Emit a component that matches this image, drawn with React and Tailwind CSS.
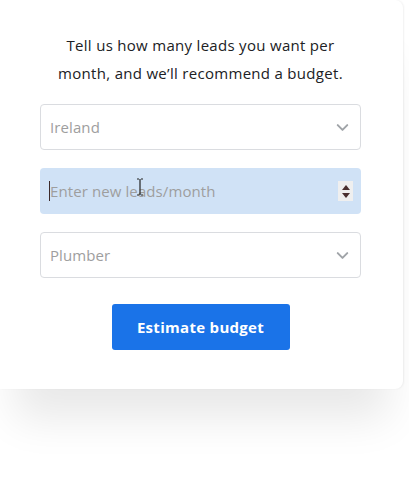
import React from 'react';
import { ChevronDown } from 'lucide-react';

const font = { fontFamily: '"Open Sans", "Liberation Sans", sans-serif' };

function SelectField({ value }) {
  return (
    <div className="flex items-center justify-between h-[46px] w-full rounded-[4px] border border-[#dadce0] bg-white pl-[9px] pr-[8px]">
      <span className="text-[15px] text-[#9e9e9e] tracking-[0.1px]">{value}</span>
      <ChevronDown size={19} strokeWidth={2.5} className="text-[#a0a4a8]" />
    </div>
  );
}

function LeadsField() {
  return (
    <div className="relative flex items-center justify-between h-[46px] w-full rounded-[4px] bg-[#d0e2f6] pl-[9px] pr-[8px]">
      <div className="flex items-center">
        <span className="block w-[1px] h-[20px] bg-[#3c2a2a]" />
        <span className="text-[15px] text-[#9e9e9e] tracking-[0.1px]">Enter new leads/month</span>
      </div>
      <div className="flex flex-col items-center justify-center gap-[3px] w-[15px] h-[20px] bg-[#efefef]">
        <span className="block w-0 h-0 border-l-[4px] border-r-[4px] border-b-[5px] border-l-transparent border-r-transparent border-b-[#4a2f2f]" />
        <span className="block w-0 h-0 border-l-[4px] border-r-[4px] border-t-[5px] border-l-transparent border-r-transparent border-t-[#4a2f2f]" />
      </div>
      {/* mouse text cursor */}
      <svg className="absolute left-[96px] top-[10px]" width="8" height="18" viewBox="0 0 8 18">
        <path d="M1 1h2M5 1h2M4 1v16M1 17h2M5 17h2" stroke="#222" strokeWidth="1.2" fill="none" />
      </svg>
    </div>
  );
}

export default function App() {
  return (
    <div className="min-h-[504px] bg-white" style={font}>
      <div className="w-[403px] bg-white rounded-r-[8px] shadow-[0_45px_40px_-15px_rgba(0,0,0,0.09),1px_0_2px_rgba(0,0,0,0.06)] pt-[31px] pb-[39px] pl-[40px] pr-[42px] flex flex-col items-center">
        <p className="text-center text-[15px] leading-[28px] tracking-[0.3px] text-[#202124]">
          Tell us how many leads you want per
          <br />
          month, and we’ll recommend a budget.
        </p>
        <div className="mt-[17px] w-full flex flex-col gap-[18px]">
          <SelectField value="Ireland" />
          <LeadsField />
          <SelectField value="Plumber" />
        </div>
        <button className="mt-[26px] h-[46px] w-[178px] rounded-[3px] bg-[#1a73e8] text-white text-[15px] font-bold tracking-[0.3px]">
          Estimate budget
        </button>
      </div>
    </div>
  );
}
